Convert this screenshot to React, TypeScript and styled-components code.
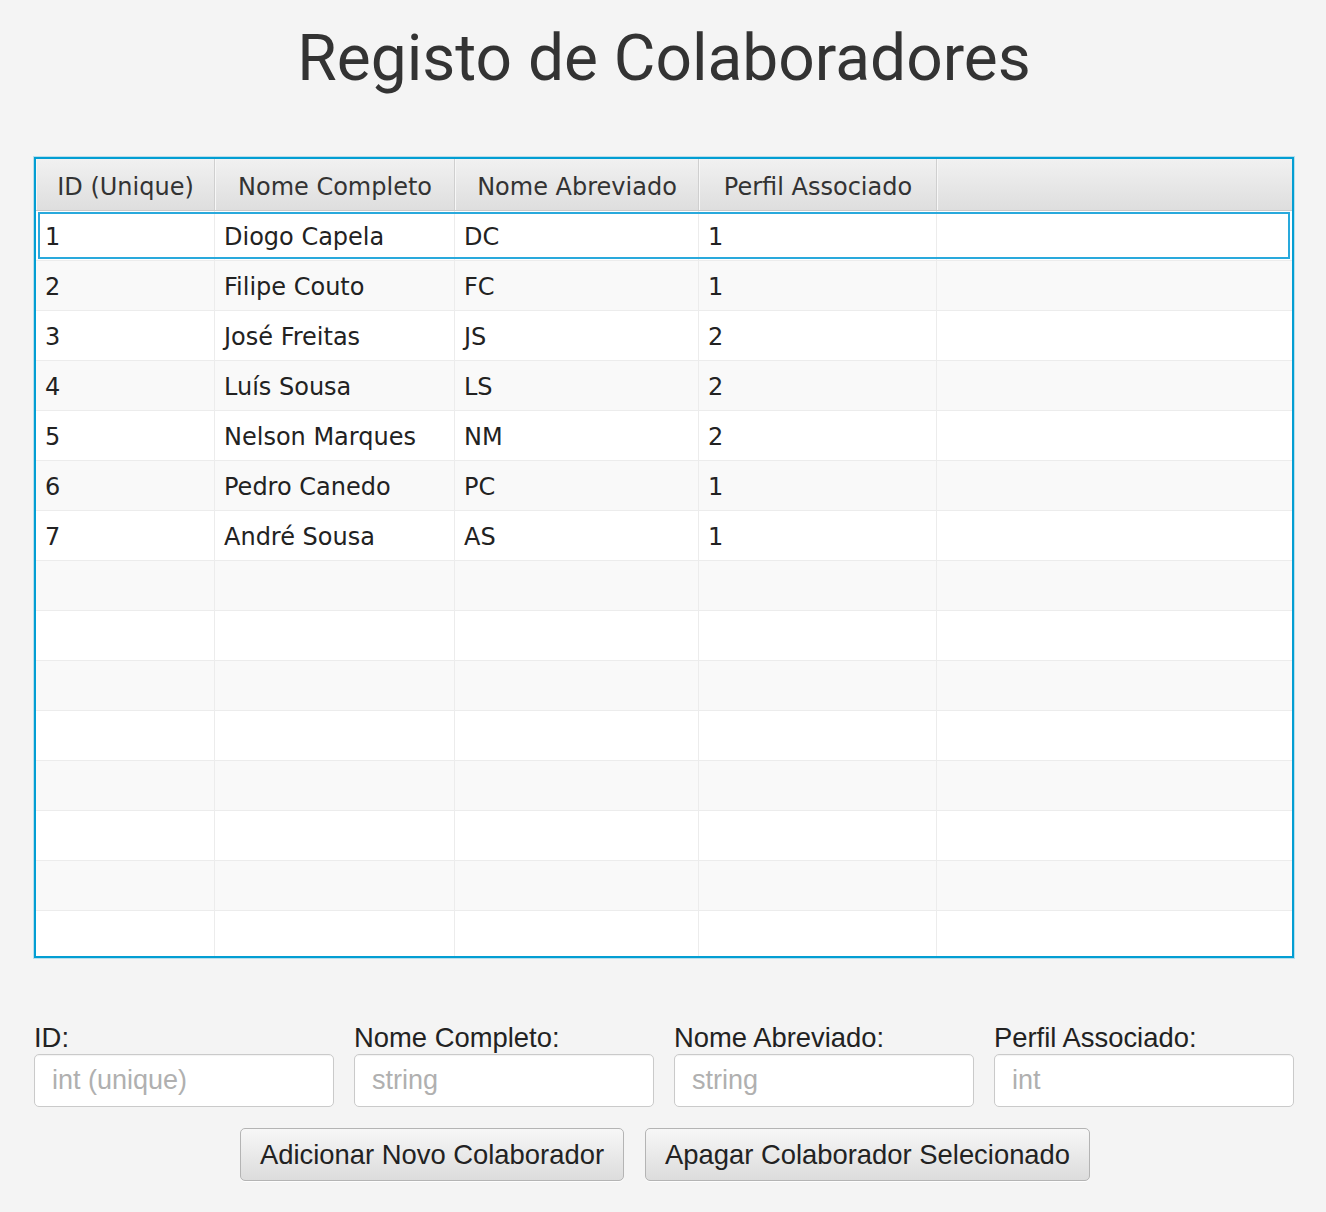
import React from 'react'
import styled, { createGlobalStyle } from 'styled-components'

const GlobalStyle = createGlobalStyle`
  html, body {
    margin: 0;
    padding: 0;
    background: #f4f4f4;
  }
  * {
    box-sizing: border-box;
  }
`

const Page = styled.div`
  width: 1326px;
  height: 1212px;
  padding: 21px 32px 0 34px;
  background: #f4f4f4;
  display: flex;
  flex-direction: column;
`

const Title = styled.h1`
  margin: 0;
  font-family: Roboto, 'Liberation Sans', sans-serif;
  font-weight: 400;
  font-size: 64px;
  line-height: 75px;
  color: #333;
  text-align: center;
`

const TableFrame = styled.div`
  margin-top: 61px;
  width: 1260px;
  height: 801px;
  border: 2px solid #039ed3;
  box-shadow: 0 0 0 1px rgba(3, 158, 211, 0.25);
  background: #fff;
  overflow: hidden;
  display: flex;
  flex-direction: column;
`

const columns = '179px 240px 244px 238px 1fr'

const HeaderRow = styled.div`
  display: grid;
  grid-template-columns: ${columns};
  height: 52px;
  flex-shrink: 0;
  border-bottom: 1px solid #c8c8c8;
`

const HeaderCell = styled.div`
  display: flex;
  align-items: center;
  justify-content: center;
  padding-top: 5px;
  background: linear-gradient(#f1f1f1, #dedede);
  border-right: 1px solid #cfcfcf;
  border-left: 1px solid #f7f7f7;
  font-family: 'DejaVu Sans', sans-serif;
  font-size: 24px;
  color: #333;
  &:last-child {
    border-right: none;
  }
`

const Body = styled.div`
  flex: 1;
  overflow: hidden;
`

const Row = styled.div<{ $odd: boolean; $selected?: boolean }>`
  position: relative;
  display: grid;
  grid-template-columns: ${columns};
  height: 50px;
  background: ${p => (p.$odd ? '#f9f9f9' : '#fff')};
  border-bottom: 1px solid #ececec;
  ${p =>
    p.$selected &&
    `
    &::after {
      content: '';
      position: absolute;
      inset: 1px 2px 1px 2px;
      border: 2px solid #29a9dc;
      pointer-events: none;
    }
  `}
`

const Cell = styled.div`
  display: flex;
  align-items: center;
  padding: 3px 0 0 9px;
  border-right: 1px solid #ececec;
  font-family: 'DejaVu Sans', sans-serif;
  font-size: 24px;
  color: #222;
  white-space: nowrap;
  &:last-child {
    border-right: none;
  }
`

const Form = styled.div`
  margin-top: 63px;
  width: 1260px;
  display: grid;
  grid-template-columns: repeat(4, 300px);
  column-gap: 20px;
`

const Field = styled.label`
  display: flex;
  flex-direction: column;
`

const FieldLabel = styled.span`
  font-family: 'Liberation Sans', Arial, sans-serif;
  font-size: 27.4px;
  line-height: 33px;
  color: #222;
`

const Input = styled.input`
  height: 53px;
  width: 100%;
  padding: 0 17px;
  border: 1px solid #cacaca;
  border-radius: 5px;
  background: #fff;
  box-shadow: inset 0 1px 1px rgba(0, 0, 0, 0.05);
  font-family: 'Liberation Sans', Arial, sans-serif;
  font-size: 27px;
  color: #222;
  outline: none;
  &::placeholder {
    color: #b0b0b0;
  }
`

const Actions = styled.div`
  margin-top: 21px;
  width: 1260px;
  display: flex;
  justify-content: center;
  gap: 21px;
  padding-left: 2px;
`

const Button = styled.button`
  height: 53px;
  padding: 0 19px;
  border: 1px solid #b4b4b4;
  border-radius: 5px;
  background: linear-gradient(#f7f7f7, #dcdcdc);
  box-shadow: 0 1px 0 rgba(255, 255, 255, 0.8);
  font-family: 'Liberation Sans', Arial, sans-serif;
  font-size: 27.4px;
  color: #222;
`

const headers = ['ID (Unique)', 'Nome Completo', 'Nome Abreviado', 'Perfil Associado', '']

const data = [
  ['1', 'Diogo Capela', 'DC', '1'],
  ['2', 'Filipe Couto', 'FC', '1'],
  ['3', 'José Freitas', 'JS', '2'],
  ['4', 'Luís Sousa', 'LS', '2'],
  ['5', 'Nelson Marques', 'NM', '2'],
  ['6', 'Pedro Canedo', 'PC', '1'],
  ['7', 'André Sousa', 'AS', '1'],
]

const rows = [...data, ...Array.from({ length: 9 }, () => ['', '', '', ''])]

const fields = [
  { label: 'ID:', placeholder: 'int (unique)' },
  { label: 'Nome Completo:', placeholder: 'string' },
  { label: 'Nome Abreviado:', placeholder: 'string' },
  { label: 'Perfil Associado:', placeholder: 'int' },
]

const App: React.FC = () => {
  return (
    <>
      <GlobalStyle />
      <Page>
        <Title>Registo de Colaboradores</Title>
        <TableFrame>
          <HeaderRow>
            {headers.map((h, i) => (
              <HeaderCell key={i}>{h}</HeaderCell>
            ))}
          </HeaderRow>
          <Body>
            {rows.map((r, i) => (
              <Row key={i} $odd={i % 2 === 1} $selected={i === 0}>
                {r.map((c, j) => (
                  <Cell key={j}>{c}</Cell>
                ))}
                <Cell />
              </Row>
            ))}
          </Body>
        </TableFrame>
        <Form>
          {fields.map(f => (
            <Field key={f.label}>
              <FieldLabel>{f.label}</FieldLabel>
              <Input placeholder={f.placeholder} />
            </Field>
          ))}
        </Form>
        <Actions>
          <Button>Adicionar Novo Colaborador</Button>
          <Button>Apagar Colaborador Selecionado</Button>
        </Actions>
      </Page>
    </>
  )
}

export default App
